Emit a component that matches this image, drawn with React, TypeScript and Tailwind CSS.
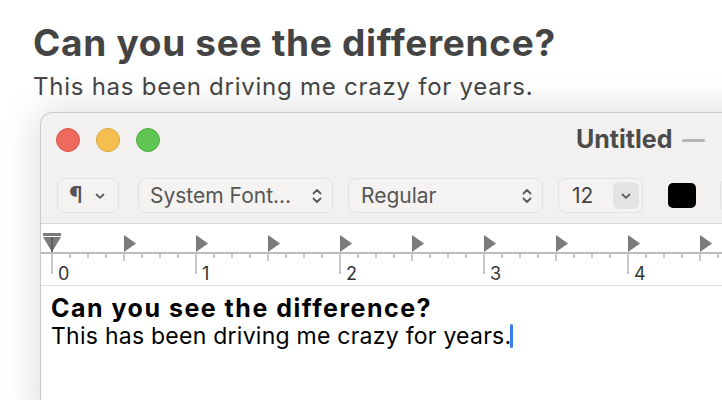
import React from 'react';

const font = { fontFamily: 'Inter, "Noto Sans", sans-serif' };

const ChevronDown = ({ className = '' }: { className?: string }) => (
  <svg width="12" height="8" viewBox="0 0 12 8" className={className}>
    <path d="M2.5 2.5 L6 5.8 L9.5 2.5" fill="none" stroke="#5a5a5a" strokeWidth="1.8" strokeLinecap="round" strokeLinejoin="round" />
  </svg>
);

const UpDown = () => (
  <svg width="12" height="18" viewBox="0 0 12 18">
    <path d="M2.5 6.5 L6 3 L9.5 6.5" fill="none" stroke="#5a5a5a" strokeWidth="1.8" strokeLinecap="round" strokeLinejoin="round" />
    <path d="M2.5 11.5 L6 15 L9.5 11.5" fill="none" stroke="#5a5a5a" strokeWidth="1.8" strokeLinecap="round" strokeLinejoin="round" />
  </svg>
);

const Ruler = () => {
  const ticks = [];
  for (let k = 0; k < 38; k++) {
    const x = 11 + k * 18;
    let y2 = 34;
    if (k % 8 === 0) y2 = 50;
    else if (k % 4 === 0) y2 = 37;
    ticks.push(<line key={k} x1={x} y1={29} x2={x} y2={y2} stroke="#bcbcbc" strokeWidth="1.6" />);
  }
  const tabs = [];
  for (let k = 0; k < 9; k++) {
    const x = 83 + k * 72;
    tabs.push(<path key={k} d={`M${x} 11 L${x + 12} 19.5 L${x} 28 Z`} fill="#7b7b7b" />);
  }
  return (
    <svg width="682" height="61" viewBox="0 0 682 61" className="block">
      <line x1="0" y1="29" x2="682" y2="29" stroke="#bcbcbc" strokeWidth="1.8" />
      {ticks}
      {tabs}
      <rect x="2" y="9" width="18" height="3" fill="#7b7b7b" />
      <path d="M2 13 L20 13 L11 28 Z" fill="#7b7b7b" />
      <line x1="11" y1="13" x2="11" y2="28" stroke="#555" strokeWidth="1.6" />
      {['0', '1', '2', '3', '4'].map((n, i) => (
        <text key={n} x={17 + i * 144} y={56} fontSize="18" fill="#333" fontFamily="Inter, sans-serif">
          {n}
        </text>
      ))}
    </svg>
  );
};

export default function App() {
  return (
    <div className="relative h-[400px] w-[722px] overflow-hidden bg-white" style={font}>
      <div className="pl-[33px] pt-[22px]">
        <h1 className="text-[37px] font-bold leading-[42px] tracking-[0.7px] text-[#444]">
          Can you see the difference?
        </h1>
        <p className="mt-[9px] text-[24px] leading-[28px] tracking-[0.75px] text-[#444]">
          This has been driving me crazy for years.
        </p>
      </div>

      <div className="ml-[40px] mt-[11px] w-[720px] overflow-hidden rounded-tl-[12px] border border-[#c9c9c9] bg-[#f2f1f0] shadow-[0_0_40px_rgba(0,0,0,0.16)]">
        {/* title bar */}
        <div className="flex h-[54px] items-center pl-[15px]">
          <div className="flex gap-[16px]">
            <span className="h-[24px] w-[24px] rounded-full border border-[#d9574c] bg-[#ee6a5f]" />
            <span className="h-[24px] w-[24px] rounded-full border border-[#d9a23b] bg-[#f5bf4f]" />
            <span className="h-[24px] w-[24px] rounded-full border border-[#4fae44] bg-[#61c554]" />
          </div>
          <span className="ml-[416px] text-[25px] font-bold text-[#4b4b4b]">Untitled</span>
          <span className="ml-[10px] h-[3px] w-[23px] rounded-full bg-[#b5b5b5]" />
        </div>

        {/* toolbar */}
        <div className="flex items-center border-b border-[#d8d7d6] pb-[10px] pl-[16px] pt-[11px]">
          <div className="flex h-[35px] w-[62px] items-center justify-between rounded-[8px] border border-[#e2e1e0] bg-[#f4f3f2] pl-[11px] pr-[12px]">
            <span className="text-[23px] font-medium text-[#555]">¶</span>
            <ChevronDown />
          </div>
          <div className="ml-[19px] flex h-[35px] w-[195px] items-center justify-between rounded-[8px] border border-[#e2e1e0] bg-[#f4f3f2] pl-[11px] pr-[9px]">
            <span className="text-[21px] text-[#555]">System Font...</span>
            <UpDown />
          </div>
          <div className="ml-[15px] flex h-[35px] w-[195px] items-center justify-between rounded-[8px] border border-[#e2e1e0] bg-[#f4f3f2] pl-[12px] pr-[9px]">
            <span className="text-[21px] text-[#555]">Regular</span>
            <UpDown />
          </div>
          <div className="ml-[15px] flex h-[35px] w-[85px] items-center justify-between rounded-[8px] border border-[#e2e1e0] bg-[#f4f3f2] pl-[13px] pr-[3px]">
            <span className="text-[21px] text-[#444]">12</span>
            <span className="flex h-[27px] w-[26px] items-center justify-center rounded-[6px] bg-[#e4e3e2]">
              <ChevronDown />
            </span>
          </div>
          <span className="ml-[25px] h-[25px] w-[28px] rounded-[5px] bg-black" />
          <span className="ml-[24px] h-[35px] w-[20px] rounded-l-[8px] border border-[#e2e1e0] bg-[#f4f3f2]" />
        </div>

        {/* ruler */}
        <div className="border-b border-[#dcdcdc] bg-white">
          <Ruler />
        </div>

        {/* text area */}
        <div className="h-[140px] bg-white pl-[10px] pt-[8px]">
          <div className="text-[25px] font-bold leading-[28px] tracking-[1.5px] text-black">Can you see the difference?</div>
          <div className="flex items-center text-[23px] leading-[28px] tracking-[0.25px] text-black">
            This has been driving me crazy for years.
            <span className="-ml-[1px] h-[24px] w-[3px] rounded-full bg-[#3a7cf6]" />
          </div>
        </div>
      </div>
    </div>
  );
}
